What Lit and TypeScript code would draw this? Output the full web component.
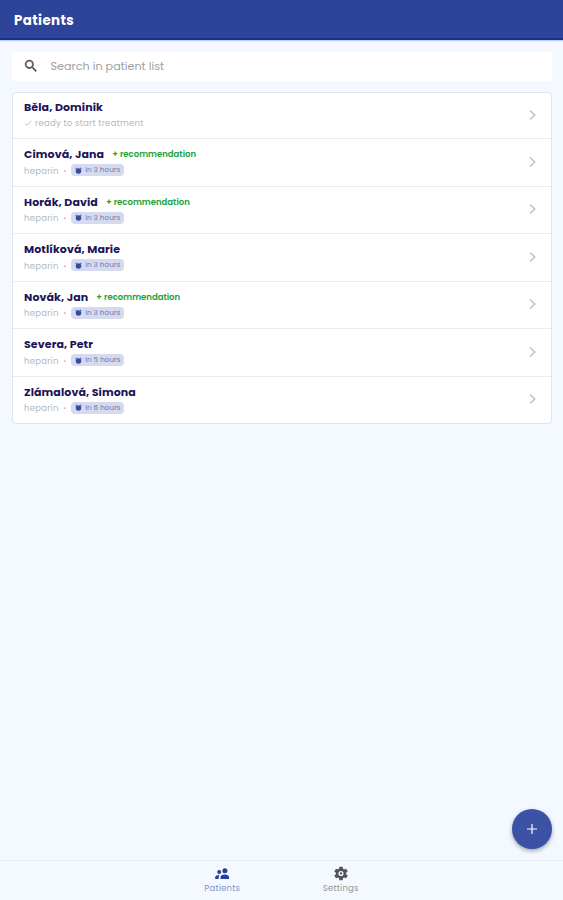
import { LitElement, html, css, svg, nothing } from "lit";
import { customElement } from "lit/decorators.js";

interface Patient {
  name: string;
  due?: string;
  recommendation?: boolean;
}

const patients: Patient[] = [
  { name: "Běla, Dominik" },
  { name: "Cimová, Jana", due: "in 3 hours", recommendation: true },
  { name: "Horák, David", due: "in 3 hours", recommendation: true },
  { name: "Motlíková, Marie", due: "in 3 hours" },
  { name: "Novák, Jan", due: "in 3 hours", recommendation: true },
  { name: "Severa, Petr", due: "in 5 hours" },
  { name: "Zlámalová, Simona", due: "in 6 hours" },
];

const icon = (name: string, size: number, box: string, body: unknown) =>
  html`<svg class="icon ${name}" width=${size} height=${size} viewBox=${box} aria-hidden="true">${body}</svg>`;

const searchIcon = icon("search-icon", 16, "0 0 24 24", svg`<path fill="currentColor" stroke="currentColor" stroke-width=".5" d="M15.5 14h-.79l-.28-.27A6.5 6.5 0 1 0 13.73 14.43l.27.28v.79l5 4.99L20.49 19zM9.5 14a4.5 4.5 0 1 1 0-9 4.5 4.5 0 0 1 0 9z"/>`);
const chevron = icon("chevron", 12, "0 0 12 12", svg`<path d="M4 1.5 8.8 6 4 10.5" fill="none" stroke="currentColor" stroke-width="1.3"/>`);
const check = icon("check", 8, "0 0 8 8", svg`<path d="M1 4.6 2.8 6.2 7.4 2" fill="none" stroke="currentColor" stroke-width=".9"/>`);
const alarm = icon("alarm", 7, "0 0 14 14", svg`<path fill="currentColor" d="M3.6.8.5 3.4l1 1.2L4.6 2zM10.4.8l3.1 2.6-1 1.2L9.4 2z"/><circle cx="7" cy="7.8" r="5.5" fill="currentColor"/>`);
const people = icon("people", 16, "0 0 16 16", svg`<g fill="currentColor"><circle cx="10.9" cy="5.3" r="2.5"/><circle cx="5.2" cy="6.5" r="2"/><path d="M6.5 13.6v-2.1c0-1.7 2.6-2.5 4.3-2.5s4.3.8 4.3 2.5v2.1zM1.2 13.6v-1.8c0-1.7 2.2-2.5 4.4-2.4-.6.6-.9 1.2-.9 2v2.2z"/></g>`);
const gear = icon("gear", 18, "0 0 24 24", svg`<path fill="currentColor" fill-rule="evenodd" d="M19.14 12.94c.04-.3.06-.61.06-.94s-.02-.64-.07-.94l2.03-1.58a.49.49 0 0 0 .12-.61l-1.92-3.32a.49.49 0 0 0-.59-.22l-2.39.96a7 7 0 0 0-1.62-.94l-.36-2.54A.48.48 0 0 0 13.92 2.4h-3.84a.47.47 0 0 0-.47.41l-.36 2.54c-.59.24-1.13.57-1.62.94l-2.39-.96a.47.47 0 0 0-.59.22L2.74 8.87a.48.48 0 0 0 .12.61l2.03 1.58c-.05.3-.09.63-.09.94s.02.64.07.94l-2.03 1.58a.49.49 0 0 0-.12.61l1.92 3.32c.12.22.37.29.59.22l2.39-.96c.5.38 1.03.7 1.62.94l.36 2.54c.05.24.24.41.48.41h3.84c.24 0 .44-.17.47-.41l.36-2.54a7 7 0 0 0 1.62-.94l2.39.96c.22.08.47 0 .59-.22l1.92-3.32a.47.47 0 0 0-.12-.61zM12 15.6a3.6 3.6 0 1 1 0-7.2 3.6 3.6 0 0 1 0 7.2z"/><circle cx="12" cy="12" r="1.6" fill="currentColor"/>`);
const plus = icon("plus", 12, "0 0 12 12", svg`<path d="M6 1v10M1 6h10" stroke="currentColor" stroke-width="1.2"/>`);

@customElement("app-root")
export class AppRoot extends LitElement {
  static styles = css`
    :host {
      display: flex;
      flex-direction: column;
      position: relative;
      height: 100vh;
      background: #f4f9ff;
      font-family: Poppins, Inter, "Noto Sans", sans-serif;
      overflow: hidden;
    }
    * { box-sizing: border-box; }
    .icon { display: block; flex: none; }
    header {
      height: 40px;
      flex: none;
      padding: 0 14px;
      display: flex;
      align-items: center;
      background: #2d4498;
      border-bottom: 2px solid #15318b;
      box-shadow: 0 1px 1px #bdcdf3;
    }
    h1 { margin: 3px 0 0; font-size: 13.4px; line-height: 18px; font-weight: 700; color: #fff; letter-spacing: 0.4px; }
    main { flex: 1; padding: 12px 11px 0 12px; }
    .search {
      height: 29px;
      display: flex;
      align-items: center;
      gap: 12px;
      padding: 0 10.5px 1px;
      background: #fff;
      color: #a0a0a0;
      font-size: 11.2px;
    }
    .search-icon { color: #4b4b4b; }
    .list {
      margin: 11px 0 0;
      padding: 0;
      list-style: none;
      background: #fff;
      border: 1px solid #dfe7ec;
      border-radius: 4px;
    }
    .row {
      height: 47.5px;
      display: flex;
      align-items: center;
      justify-content: space-between;
      padding: 0 13px 0.4px 11px;
      border-top: 1px solid #e8eced;
    }
    .row:first-child { height: 45px; border-top: 0; }
    .title { display: flex; align-items: center; height: 16px; gap: 8px; }
    .name { font-size: 11px; font-weight: 700; color: #1c1458; letter-spacing: 0.11px; white-space: nowrap; }
    .recommendation { font-size: 8.5px; font-weight: 600; color: #1ca238; white-space: nowrap; }
    .detail { display: flex; align-items: center; height: 15px; font-size: 8.5px; letter-spacing: 0.25px; color: #b6b7bf; white-space: nowrap; }
    .drug { padding-top: 2px; }
    .check { margin-right: 3px; }
    .dot { width: 12.5px; padding-top: 2px; text-align: center; font-weight: 700; }
    .due {
      display: flex;
      align-items: center;
      gap: 3px;
      width: 53px;
      height: 12px;
      padding: 0 4px;
      border-radius: 4px;
      background: #d5daef;
      color: #7079ad;
      font-size: 7.2px;
      letter-spacing: 0.05px;
    }
    .alarm { color: #354ba3; }
    .chevron { margin-bottom: 1px; color: #b9bcc1; }
    .fab {
      position: absolute;
      right: 11px;
      bottom: 51px;
      width: 40px;
      height: 40px;
      padding: 0;
      border: 0;
      border-radius: 50%;
      display: grid;
      place-items: center;
      background: #3c52a5;
      color: #fff;
      box-shadow: 0 2px 4px rgba(30, 40, 70, 0.4);
    }
    nav {
      height: 40px;
      flex: none;
      display: flex;
      justify-content: center;
      border-top: 1px solid #e6edf5;
    }
    .tab {
      width: 118.5px;
      display: flex;
      flex-direction: column;
      align-items: center;
      padding-top: 4px;
      font-size: 8.5px;
      line-height: 11px;
      letter-spacing: 0.22px;
      color: #929499;
    }
    .tab .icon { height: 17px; margin-bottom: 1px; color: #505357; }
    .tab.active { color: #8490c4; }
    .tab.active .icon { color: #263f9b; }
  `;

  private renderPatient(p: Patient) {
    return html`<li class="row">
      <div>
        <div class="title">
          <span class="name">${p.name}</span>
          ${p.recommendation ? html`<span class="recommendation">+ recommendation</span>` : nothing}
        </div>
        <div class="detail">
          ${p.due
            ? html`<span class="drug">heparin</span><span class="dot">·</span><span class="due">${alarm}<span>${p.due}</span></span>`
            : html`${check}<span class="ready">ready to start treatment</span>`}
        </div>
      </div>
      ${chevron}
    </li>`;
  }

  render() {
    return html`
      <header><h1>Patients</h1></header>
      <main>
        <div class="search">${searchIcon}<span class="placeholder">Search in patient list</span></div>
        <ul class="list">${patients.map((p) => this.renderPatient(p))}</ul>
      </main>
      <button class="fab" aria-label="Add patient">${plus}</button>
      <nav>
        <div class="tab active">${people}<span>Patients</span></div>
        <div class="tab">${gear}<span>Settings</span></div>
      </nav>
    `;
  }
}
